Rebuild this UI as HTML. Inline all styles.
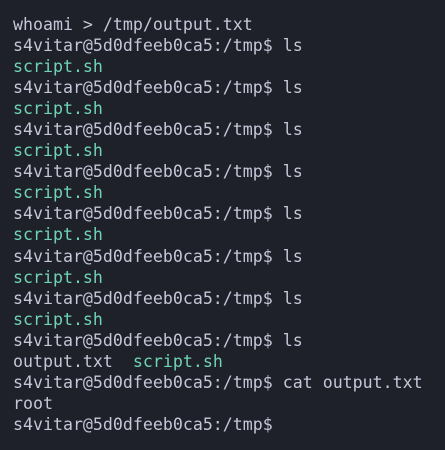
<!DOCTYPE html>
<html><head><meta charset="utf-8"><style>
html,body{margin:0;padding:0;background:#1e2129;width:445px;height:450px;overflow:hidden}
pre{margin:0;padding:14px 0 0 13px;font-family:"DejaVu Sans Mono","Liberation Mono",monospace;font-size:16.6px;line-height:21.05px;color:#c5c6d8;white-space:pre}
.g{color:#6fd3b5}
</style></head><body><pre>whoami &gt; /tmp/output.txt
s4vitar@5d0dfeeb0ca5:/tmp$ ls
<span class="g">script.sh</span>
s4vitar@5d0dfeeb0ca5:/tmp$ ls
<span class="g">script.sh</span>
s4vitar@5d0dfeeb0ca5:/tmp$ ls
<span class="g">script.sh</span>
s4vitar@5d0dfeeb0ca5:/tmp$ ls
<span class="g">script.sh</span>
s4vitar@5d0dfeeb0ca5:/tmp$ ls
<span class="g">script.sh</span>
s4vitar@5d0dfeeb0ca5:/tmp$ ls
<span class="g">script.sh</span>
s4vitar@5d0dfeeb0ca5:/tmp$ ls
<span class="g">script.sh</span>
s4vitar@5d0dfeeb0ca5:/tmp$ ls
output.txt  <span class="g">script.sh</span>
s4vitar@5d0dfeeb0ca5:/tmp$ cat output.txt
root
s4vitar@5d0dfeeb0ca5:/tmp$</pre></body></html>
